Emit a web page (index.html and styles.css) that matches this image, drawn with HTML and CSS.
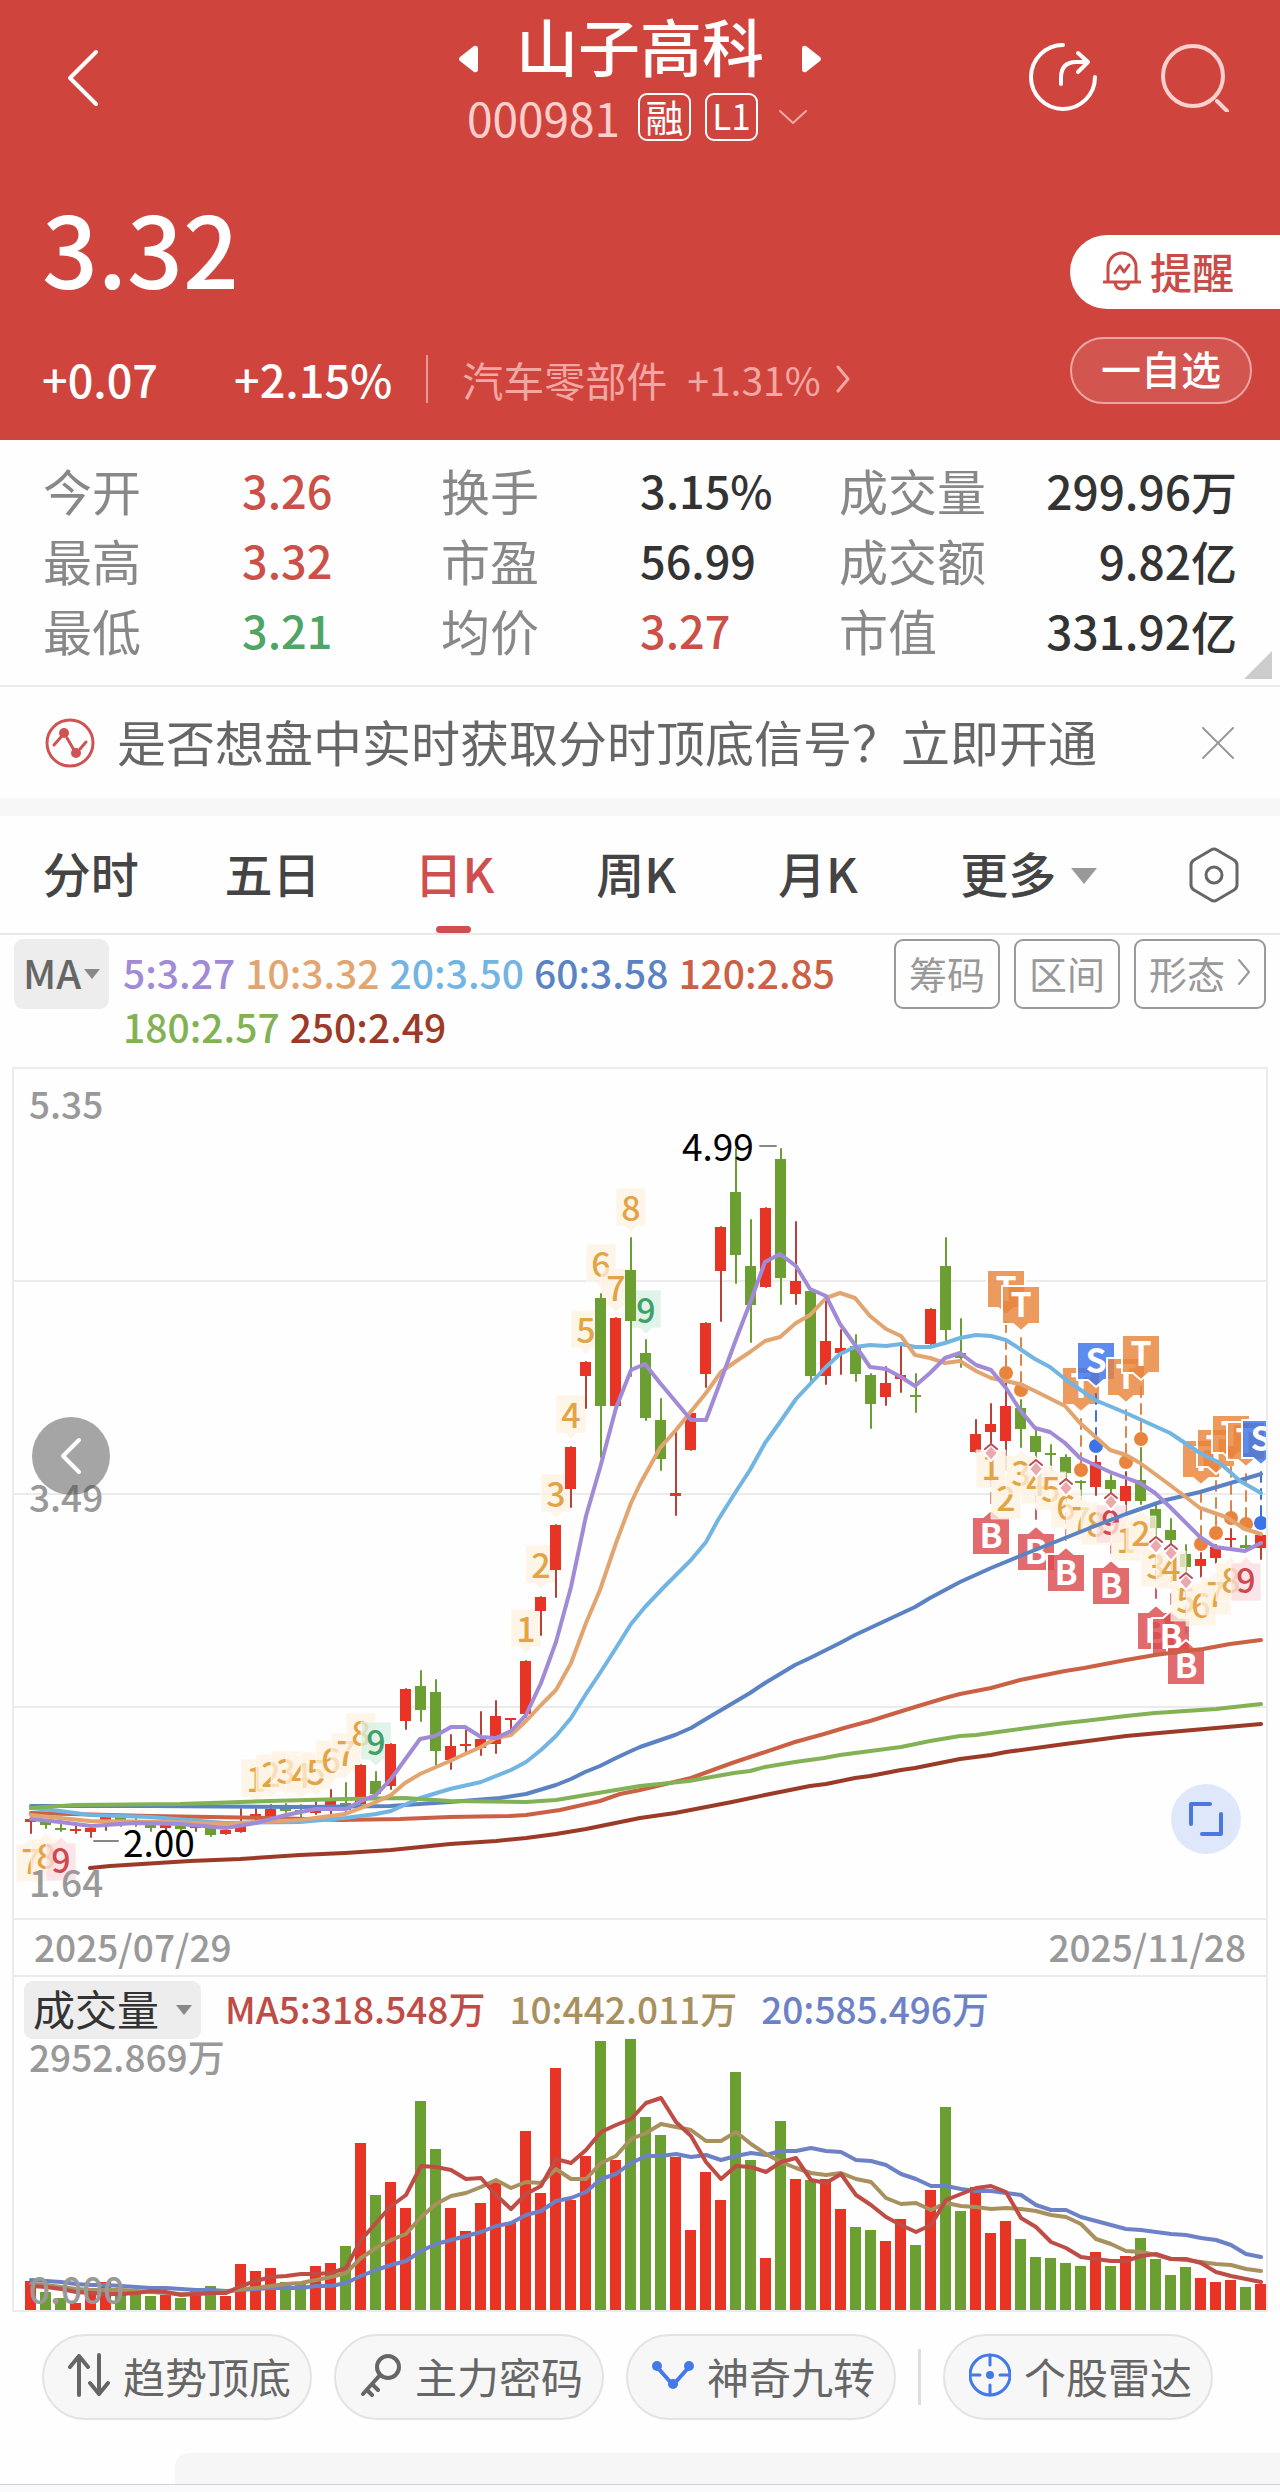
FILE: index.html
```html
<!DOCTYPE html>
<html lang="zh-CN">
    <head>
        <meta charset="utf-8">
        <title>山子高科 000981</title>
        <meta name="viewport" content="width=device-width">
        <link rel="stylesheet" href="styles.css">
    </head>
    <body>
        <header class="header">
            <div class="topbar">
                <button class="back" aria-label="返回">
                    <svg width="36" height="60" viewBox="0 0 36 60"><path d="M31 4 5 30 31 56"/></svg>
                </button>
                <div class="stock">
                    <div class="stock-name">
                        <button class="arrow" aria-label="上一只"><svg width="20" height="28" viewBox="0 0 20 28"><path d="M16 1Q20 0 20 4V24Q20 28 16 27L2 16Q0 14 2 12Z"/></svg></button>
                        <h1>山子高科</h1>
                        <button class="arrow" aria-label="下一只"><svg width="20" height="28" viewBox="0 0 20 28"><path d="M4 1Q0 0 0 4V24Q0 28 4 27L18 16Q20 14 18 12Z"/></svg></button>
                    </div>
                    <div class="stock-code">
                        <span class="code">000981</span>
                        <span class="tag">融</span>
                        <span class="tag tag-level">L1</span>
                        <svg class="down" width="28" height="16" viewBox="0 0 28 16"><path d="M1 2 14 14 27 2"/></svg>
                    </div>
                </div>
                <div class="tools">
                    <button aria-label="分享">
                        <svg width="70" height="70" viewBox="0 0 70 70"><path d="M35 3A32 32 0 1 0 67 35M33 42V36Q33 20 48 20H58M50 11 60 20 50 30"/></svg>
                    </button>
                    <button aria-label="搜索" class="search">
                        <svg width="70" height="70" viewBox="0 0 70 70"><circle cx="33" cy="34" r="30"/><path d="M57 59 67 69"/></svg>
                    </button>
                </div>
            </div>
            <div class="quote">
                <div>
                    <div class="price">3.32</div>
                    <div class="changes">
                        <span class="diff">+0.07</span>
                        <span>+2.15%</span>
                        <a href="#" class="sector">汽车零部件 <span class="sector-rate">+1.31%</span>
                            <svg width="14" height="30" viewBox="0 0 14 30"><path d="M2 3 12 15 2 27"/></svg>
                        </a>
                    </div>
                </div>
                <div class="actions">
                    <button class="remind">
                        <svg width="38" height="42" viewBox="0 0 38 42"><path d="M5 33V18a14 14 0 0 1 28 0v15M1 33H37M12 34q1 6 7 6t7-6M12 24l5-7 4 6 5-7"/></svg>
                        提醒
                    </button>
                    <button class="favorite">一自选</button>
                </div>
            </div>
        </header>

        <dl class="stats">
            <div><dt>今开</dt><dd class="up">3.26</dd></div>
            <div><dt>换手</dt><dd>3.15%</dd></div>
            <div><dt>成交量</dt><dd>299.96万</dd></div>
            <div><dt>最高</dt><dd class="up">3.32</dd></div>
            <div><dt>市盈</dt><dd>56.99</dd></div>
            <div><dt>成交额</dt><dd>9.82亿</dd></div>
            <div><dt>最低</dt><dd class="down-price">3.21</dd></div>
            <div><dt>均价</dt><dd class="up">3.27</dd></div>
            <div><dt>市值</dt><dd>331.92亿</dd></div>
        </dl>

        <div class="notice">
            <svg width="50" height="50" viewBox="0 0 50 50">
                <circle class="ring" cx="25" cy="25" r="23"/>
                <path d="M9 27 16 19M22 20 29 32M35 31 41 24"/>
                <circle class="dot" cx="19" cy="15" r="5"/><circle class="dot" cx="31" cy="35" r="5"/>
            </svg>
            <a href="#">是否想盘中实时获取分时顶底信号？立即开通</a>
            <button class="close" aria-label="关闭"><svg width="32" height="32" viewBox="0 0 32 32"><path d="M1 1 31 31M31 1 1 31"/></svg></button>
        </div>

        <nav class="tabs">
            <button>分时</button>
            <button>五日</button>
            <button class="active">日K</button>
            <button>周K</button>
            <button>月K</button>
            <button class="more">更多</button>
            <button class="settings" aria-label="设置">
                <svg width="50" height="56" viewBox="0 0 50 56"><path d="M22 3Q25 1 28 3L45 13Q48 15 48 18V38Q48 41 45 43L28 53Q25 55 22 53L5 43Q2 41 2 38V18Q2 15 5 13Z"/><circle cx="25" cy="28" r="8"/></svg>
            </button>
        </nav>

        <section class="ma-bar">
            <div class="picker">
                <select aria-label="主图指标"><option>MA</option></select>
            </div>
            <div class="legend">
                <span class="ma5">5:3.27</span>
                <span class="ma10">10:3.32</span>
                <span class="ma20">20:3.50</span>
                <span class="ma60">60:3.58</span>
                <span class="ma120">120:2.85</span>
                <span class="ma180">180:2.57</span>
                <span class="ma250">250:2.49</span>
            </div>
            <div class="ma-tools">
                <button>筹码</button>
                <button>区间</button>
                <button>形态<svg width="14" height="30" viewBox="0 0 14 30"><path d="M2 3 12 15 2 27"/></svg></button>
            </div>
        </section>

        <section class="chart">
            <div class="panel">
                <svg id="kline" viewBox="14 9 1252 849"></svg>
                <button class="prev" aria-label="向前"><svg width="24" height="38" viewBox="0 0 24 38"><path d="M20 3 4 19 20 35"/></svg></button>
                <button class="expand" aria-label="全屏"><svg width="34" height="34" viewBox="0 0 34 34"><path d="M2 22V2H21M32 12V32H13"/></svg></button>
            </div>
            <div class="dates"><span>2025/07/29</span><span>2025/11/28</span></div>
            <div class="vol-bar">
                <div class="picker vol-picker">
                    <select aria-label="副图指标"><option>成交量</option></select>
                </div>
                <span class="vol5">MA5:318.548万</span>
                <span class="vol10">10:442.011万</span>
                <span class="vol20">20:585.496万</span>
            </div>
            <svg id="volume" viewBox="14 0 1252 271"></svg>
        </section>

        <div class="features">
            <button>
                <svg width="42" height="44" viewBox="0 0 42 44"><path d="M11 42V3M2 14 11 3 20 14M31 2V41M22 30 31 41 40 30"/></svg>
                趋势顶底
            </button>
            <button>
                <svg width="42" height="44" viewBox="0 0 42 44"><circle cx="28" cy="14" r="11"/><path d="M20 22 3 41M12 31 18 37M7 37 12 42"/></svg>
                主力密码
            </button>
            <button>
                <svg class="blue" width="42" height="44" viewBox="0 0 42 44"><path d="M5 14 21 32 37 14"/><circle class="fill" cx="5" cy="13" r="5"/><circle class="fill" cx="21" cy="31" r="5"/><circle class="fill" cx="37" cy="13" r="5"/></svg>
                神奇九转
            </button>
            <span class="divider"></span>
            <button>
                <svg class="blue thin" width="42" height="44" viewBox="0 0 42 44"><circle cx="21" cy="22" r="20"/><path d="M21 2V12M21 32V42M1 22H11M31 22H41"/><circle class="fill" cx="21" cy="22" r="4"/></svg>
                个股雷达
            </button>
        </div>
        <div class="sheet"></div>
        <footer class="footer"></footer>

        <script src="script.js"></script>
    </body>
</html>
```

FILE: styles.css
```css
*{
    box-sizing: border-box;
}
body{
    margin: 0;
    background-color: #fefefe;
    font-family: "Noto Sans CJK SC", "Noto Sans", sans-serif;
    color: #333;
}
button, select{
    margin: 0;
    padding: 0;
    border: 0;
    background: none;
    font-family: inherit;
    font-weight: inherit;
    color: inherit;
}
a{
    color: inherit;
    text-decoration: none;
}
svg{
    display: block;
    flex: none;
    fill: none;
    stroke-linecap: round;
    stroke-linejoin: round;
}

/* header */
.header{
    background-color: #cf453e;
    color: #fff;
    padding-bottom: 36px;
}
.header svg{
    stroke: #fff;
    stroke-width: 4;
}
.topbar{
    display: grid;
    grid-template-columns: 1fr auto 1fr;
    height: 141px;
    padding: 13px 50px 0;
}
.back{
    justify-self: start;
    align-self: start;
    margin: 35px 0 0 15px;
}
.stock-name{
    display: flex;
    justify-content: center;
    align-items: flex-end;
    gap: 38px;
    height: 64px;
}
.stock-name h1{
    margin: 0;
    font-size: 62px;
    line-height: 64px;
    font-weight: 500;
}
.arrow{
    margin-bottom: 4px;
}
.header .arrow svg{
    fill: #fff;
    stroke: none;
}
.stock-code{
    display: flex;
    justify-content: center;
    align-items: center;
    margin-top: 16px;
    padding-right: 6px;
}
.code{
    margin-right: 18px;
    font-size: 46px;
    line-height: 48px;
    color: #fccfcd;
}
.tag{
    width: 53px;
    height: 48px;
    margin-right: 14px;
    border: 2px solid #fff;
    border-radius: 9px;
    font-size: 38px;
    line-height: 42px;
    text-align: center;
}
.tag-level{
    margin-right: 21px;
    font-size: 35px;
    line-height: 40px;
}
.header .down{
    stroke: #f3aaa7;
    stroke-width: 2;
}
.tools{
    display: flex;
    justify-self: end;
    align-self: start;
    gap: 62px;
    margin-top: 29px;
}
.header .search svg{
    stroke: #fbd0ce;
}
.quote{
    display: flex;
    justify-content: space-between;
}
.price{
    margin-top: 43px;
    padding-left: 42px;
    font-size: 98px;
    line-height: 124px;
    font-weight: 500;
}
.changes{
    display: flex;
    align-items: center;
    margin-top: 47px;
    padding-left: 42px;
    font-size: 45px;
    line-height: 48px;
    font-weight: 500;
}
.diff{
    margin-right: 76px;
}
.sector{
    display: flex;
    align-items: center;
    margin-left: 34px;
    padding-left: 34px;
    border-left: 2px solid #e59a96;
    font-size: 41px;
    font-weight: 400;
    color: #f2a7a3;
}
.sector-rate{
    margin: 0 15px 0 20px;
    font-size: 39px;
}
.header .sector svg{
    stroke: #f2a7a3;
    stroke-width: 3;
}
.actions{
    display: flex;
    flex-direction: column;
    gap: 28px;
    width: 210px;
    padding-top: 94px;
}
.remind{
    display: flex;
    align-items: center;
    gap: 9px;
    height: 74px;
    padding-left: 33px;
    padding-bottom: 4px;
    border-radius: 37px 0 0 37px;
    background-color: #fff;
    color: #c94c48;
    font-size: 42px;
    font-weight: 500;
}
.header .remind svg{
    stroke: #c94c48;
    stroke-width: 3;
}
.favorite{
    width: 182px;
    height: 67px;
    padding-bottom: 5px;
    border: 2px solid #eba6a3;
    border-radius: 34px;
    background-color: #d3554f;
    font-size: 40px;
    line-height: 58px;
    font-weight: 500;
}

/* quote table */
.stats{
    position: relative;
    display: grid;
    grid-template-columns: 1fr 1fr 1fr;
    margin: 0;
    padding: 15px 43px 20px 43px;
    border-bottom: 2px solid #ebebeb;
}
.stats::after{
    content: "";
    position: absolute;
    right: 8px;
    bottom: 6px;
    border-left: 28px solid transparent;
    border-bottom: 28px solid #ccc;
}
.stats div{
    display: flex;
    height: 70px;
    line-height: 70px;
}
.stats dt{
    width: 50%;
    font-size: 49px;
    color: #888;
}
.stats dd{
    margin: 0;
    font-size: 45px;
    font-weight: 500;
    white-space: nowrap;
}
.stats div:nth-child(3n){
    justify-content: space-between;
}
.stats div:nth-child(3n) dt{
    width: auto;
}
.stats div:nth-child(3n) dd{
    font-size: 46px;
}
.stats .up{
    color: #cb5047;
}
.stats .down-price{
    color: #4fa466;
}

.notice{
    display: flex;
    align-items: center;
    height: 129px;
    padding: 0 46px 0 45px;
    border-bottom: 18px solid #f7f7f7;
    font-size: 49px;
    color: #666;
}
.notice a{
    flex: 1;
    padding: 0 0 3px 22px;
    line-height: 60px;
}
.notice svg{
    stroke: #cf5353;
    stroke-width: 3;
}
.notice .dot{
    fill: #cf5353;
    stroke: none;
}
.notice .close svg{
    stroke: #999;
    stroke-width: 2;
}

/* period tabs */
.tabs{
    display: flex;
    align-items: center;
    height: 119px;
    border-bottom: 2px solid #e9e9e9;
    font-weight: 500;
}
.tabs button{
    position: relative;
    width: 14.2%;
    height: 117px;
    padding-bottom: 5px;
    font-size: 48px;
    color: #444;
}
.tabs .active{
    color: #cf4f50;
}
.tabs .active::after{
    content: "";
    position: absolute;
    left: 50%;
    bottom: 0;
    width: 35px;
    height: 7px;
    margin-left: -18px;
    border-radius: 4px;
    background-color: #cf4f50;
}
.tabs .more{
    display: flex;
    flex: 1;
    align-items: center;
    justify-content: center;
    gap: 15px;
}
.more::after{
    content: "";
    margin-top: 8px;
    border: 13px solid transparent;
    border-top: 16px solid #999;
    border-bottom: 0;
}
.tabs .settings{
    width: 50px;
    margin: 0 41px 0 40px;
    padding: 0;
}
.settings svg{
    stroke: #666;
    stroke-width: 3;
}

/* moving average legend */
.ma-bar{
    display: flex;
    align-items: flex-start;
    height: 132px;
    padding: 4px 14px 0;
}
.picker{
    position: relative;
    width: 95px;
    height: 70px;
    border-radius: 9px;
    background-color: #ededed;
}
.picker select{
    appearance: none;
    width: 100%;
    height: 100%;
    padding: 0 0 5px 9px;
    font-size: 40px;
    font-weight: 500;
    color: #666;
}
.picker::after{
    content: "";
    position: absolute;
    right: 9px;
    top: 50%;
    margin-top: -5px;
    border: 8px solid transparent;
    border-top: 10px solid #888;
    border-bottom: 0;
    pointer-events: none;
}
.legend{
    display: flex;
    flex: 1;
    flex-wrap: wrap;
    column-gap: 10px;
    padding: 6px 0 0 14px;
    font-size: 39px;
    line-height: 54px;
    font-weight: 500;
}
.ma5{ color: #a18ad6; }
.ma10{ color: #e3a56f; }
.ma20{ color: #73b5e2; }
.ma60{ color: #5b83c4; }
.ma120{ color: #cb6045; }
.ma180{ color: #83b254; }
.ma250{ color: #9c3a28; }
.ma-tools{
    display: flex;
    gap: 14px;
}
.ma-tools button{
    display: flex;
    align-items: center;
    gap: 12px;
    height: 70px;
    padding: 0 13px 4px;
    border: 2px solid #999;
    border-radius: 9px;
    font-size: 38px;
    color: #999;
}
.ma-tools svg{
    stroke: #999;
    stroke-width: 2;
}

/* charts */
.chart{
    margin: 0 12px;
    border: 2px solid #ebebeb;
}
.chart > svg, .panel > svg{
    width: 100%;
}
#volume{
    overflow: visible;
}
.panel{
    position: relative;
}
.prev{
    position: absolute;
    left: 18px;
    top: 41%;
    display: flex;
    align-items: center;
    justify-content: center;
    width: 78px;
    height: 78px;
    border-radius: 50%;
    background-color: rgba(75, 75, 75, 0.5);
}
.prev svg{
    stroke: #fff;
    stroke-width: 4;
}
.expand{
    position: absolute;
    right: 25px;
    bottom: 64px;
    display: flex;
    align-items: center;
    justify-content: center;
    width: 70px;
    height: 70px;
    border-radius: 50%;
    background-color: #dfe7fa;
}
.expand svg{
    stroke: #4a78e0;
    stroke-width: 4;
}
.dates{
    display: flex;
    justify-content: space-between;
    height: 59px;
    padding: 0 20px;
    border: solid #ebebeb;
    border-width: 2px 0;
    font-size: 37px;
    line-height: 52px;
    font-weight: 500;
    color: #999;
}
.vol-bar{
    display: flex;
    align-items: center;
    gap: 24px;
    height: 62px;
    padding: 4px 10px 0;
    font-size: 37px;
    line-height: 50px;
    font-weight: 500;
}
.vol-bar span{
    padding-bottom: 4px;
}
.vol-picker{
    width: 177px;
    height: 58px;
}
.vol-picker select{
    padding-bottom: 4px;
    font-size: 42px;
    line-height: 52px;
    font-weight: 400;
    color: #333;
}
.vol5{ color: #c04c46; }
.vol10{ color: #a8905f; }
.vol20{ color: #6d82c6; }

.grid{ stroke: #ebebeb; stroke-width: 2; }
.line{ stroke: currentColor; stroke-width: 4; }
.red{ fill: #e73425; stroke: #e73425; stroke-width: 0; }
.green{ fill: #6c9f31; stroke: #6c9f31; stroke-width: 0; }
.wick{ stroke-width: 2; }
.red.wick{ stroke: #b84238; }
.axis{ font-size: 37px; font-weight: 500; fill: #999; }
.peak{ font-size: 37px; fill: #000; }
.peak-line{ stroke: #888; stroke-width: 2; }
.badge{ fill: #fdf1e1; fill-opacity: 0.75; stroke: #fff; stroke-opacity: 0.6; stroke-width: 1; }
.badge-text{ font-size: 34px; font-weight: 500; fill: #e2a446; text-anchor: middle; }
.badge.nine-red{ fill: #f9dce0; }
.badge-text.nine-red{ fill: #cf4750; }
.badge.nine-green{ fill: #d7f0e2; }
.badge-text.nine-green{ fill: #41a067; }
.mark{ stroke: #fff; stroke-width: 2; fill-opacity: 0.82; }
.mark-text{ font-size: 34px; font-weight: 700; fill: #fff; text-anchor: middle; }
.mark-line{ stroke-width: 2; stroke-dasharray: 10 7; }
.fill-t{ fill: #e9843c; }
.fill-s{ fill: #3b73ea; }
.fill-b{ fill: #dc4a4e; }
.stroke-t{ stroke: #e08548; }
.stroke-s{ stroke: #3b73d8; }
.stroke-b{ stroke: #cf5b66; }
.gem{ fill: #e9a9ad; stroke: #fff; stroke-width: 2; }
.gem-top{ stroke: #b94d57; stroke-width: 2; }

/* bottom buttons */
.features{
    display: flex;
    align-items: center;
    gap: 22px;
    padding: 22px 42px 33px;
}
.features button{
    display: flex;
    align-items: center;
    gap: 13px;
    height: 86px;
    padding: 0 19px 4px 24px;
    border: 2px solid #e3e3e3;
    border-radius: 43px;
    background-color: #f7f7f7;
    font-size: 42px;
    color: #666;
    white-space: nowrap;
}
.features svg{
    stroke: #666;
    stroke-width: 4;
}
.features .blue{
    stroke: #4379e8;
}
.features .thin{
    stroke-width: 3;
}
.blue .fill{
    fill: #4379e8;
    stroke: none;
}
.divider{
    width: 3px;
    height: 56px;
    background-color: #ddd;
}
.sheet{
    height: 31px;
    margin-left: 175px;
    border-radius: 14px 0 0 0;
    background-color: #f6f6f6;
}
.footer{
    height: 8px;
    border-top: 1px solid #cfcfd4;
    background-color: #f9f9fb;
}
```

FILE: script.js
```javascript
var kline = document.getElementById('kline');
var volume = document.getElementById('volume');

// colour, high, top of body, bottom of body, low, volume
var days = [
    ['r',759,759,762,773,29],['g',760,762,765,768,18],['g',763,768,770,771,12],['r',765,769,771,773,7],['r',766,768,772,777,17],
    ['r',757,757,761,770,28],['g',757,757,761,766,17],['g',759,762,764,766,17],['g',764,765,768,771,14],['r',764,765,768,771,15],
    ['g',764,766,769,770,12],['r',765,766,768,771,22],['g',768,768,775,776,24],['r',770,770,774,774,14],['r',749,762,772,772,46],
    ['r',749,754,758,760,39],['r',745,749,757,757,42],['g',744,747,751,752,28],['g',745,750,752,758,26],['r',742,751,753,754,44],
    ['r',730,741,751,755,47],['g',723,743,750,751,64],['r',705,705,744,744,167],['g',712,721,734,735,115],['r',684,684,726,729,128],
    ['r',629,629,661,669,102],['g',611,626,650,661,209],['g',620,632,691,706,161],['r',675,686,700,709,102],['r',670,684,686,692,79],
    ['r',652,679,688,695,107],['r',641,656,684,693,128],['r',659,658,660,670,88],['r',601,601,654,657,179],['r',537,537,551,575,117],
    ['r',465,465,510,537,242],['r',387,387,429,447,110],['r',302,302,316,348,154],['g',234,238,346,397,269],['r',258,258,346,346,150],
    ['g',178,210,261,316,271],['g',280,293,358,360,193],['g',339,360,399,410,175],['r',369,433,436,455,153],['r',353,353,390,390,80],
    ['r',263,263,314,327,138],['r',167,167,211,261,110],['g',89,132,195,223,238],['g',160,206,245,282,150],['r',148,148,227,227,52],
    ['g',89,99,218,244,189],['r',162,221,234,244,131],['g',231,231,316,321,130],['r',237,281,316,324,131],['r',270,288,293,314,101],
    ['g',275,286,314,321,83],['g',314,315,344,368,80],['r',307,323,337,345,69],['r',286,315,319,332,91],['g',314,335,337,352,65],
    ['r',249,249,284,284,120],['g',178,206,270,283,203],['g',259,293,298,307,99],['r',360,374,392,392,123],['r',344,364,372,383,77],
    ['r',317,346,381,410,89],['g',340,348,369,387,71],['g',369,376,392,397,53],['g',385,393,395,410,52],['g',395,397,413,419,47],
    ['g',421,421,423,439,44],['r',396,402,427,435,58],['g',415,420,429,432,44],['r',412,426,441,452,54],['g',388,420,441,444,72],
    ['g',445,449,468,475,51],['g',459,470,480,485,35],['g',485,494,507,511,43],['r',493,499,506,517,32],['r',485,487,498,503,28],
    ['r',469,478,480,488,30],['g',476,485,488,490,23],['r',475,475,488,499,26]
];

var maLines = {
    ma250: '90,808 110,806 190,801 240,799 300,795 345,793 391,790 450,784 496,781 526,778 556,774 586,769 640,758 675,753 732,742 765,735 810,726 826,724 855,718 870,716 901,710 915,708 960,699 991,695 1006,692 1065,684 1126,676 1170,672 1216,668 1261,664',
    ma120: '31,753 150,756 210,757 270,758 340,760 400,759 450,757 510,756 526,755 560,750 600,741 620,734 640,730 691,718 732,703 762,693 795,682 824,674 844,668 870,661 886,656 915,647 945,638 960,634 991,628 1020,620 1065,611 1084,608 1126,600 1155,595 1185,591 1203,589 1230,584 1261,580',
    ma60: '31,746 150,746 300,747 390,746 450,742 500,738 526,734 556,725 571,719 585,712 600,706 616,698 631,691 640,687 675,675 691,668 706,659 750,633 765,623 795,605 810,598 840,583 855,575 885,561 915,547 930,538 960,522 991,508 1020,496 1065,478 1095,466 1126,454 1166,440 1200,432 1261,414',
    ma20: '31,748 60,751 90,755 150,757 226,763 300,762 345,758 376,754 391,751 420,738 450,729 481,722 511,710 526,702 541,690 556,676 571,658 586,634 600,613 616,588 631,564 645,547 664,527 691,500 706,482 718,460 735,433 750,410 765,383 780,362 796,339 826,307 840,294 855,287 870,285 886,286 901,284 915,287 930,287 945,283 960,278 976,275 991,276 1006,280 1020,289 1035,299 1050,307 1065,319 1095,340 1126,353 1170,373 1200,393 1220,403 1240,421 1261,433',
    ma180: '31,748 75,745 180,744 270,741 345,739 405,738 450,741 526,742 556,740 586,735 640,726 689,721 734,713 750,711 765,707 795,702 824,698 840,695 901,687 930,681 960,676 976,675 1065,663 1084,661 1126,656 1155,653 1216,649 1261,644',
    ma10: '31,755 90,761 170,762 226,764 256,762 300,760 345,754 361,748 376,742 391,735 405,723 420,714 450,701 465,694 481,687 496,678 511,675 526,661 541,645 556,630 571,603 586,563 600,530 616,483 631,443 640,424 660,388 676,370 706,333 721,312 735,302 750,292 765,281 780,277 796,263 810,255 826,238 840,233 855,238 870,256 886,269 901,276 915,295 930,298 945,303 960,301 976,311 991,318 1020,324 1035,331 1065,346 1080,363 1110,390 1126,395 1140,403 1170,425 1200,448 1226,457 1245,469 1261,474',
    ma5: '31,759 60,762 91,766 135,763 180,764 226,768 256,763 286,755 316,749 346,749 361,741 376,735 391,719 420,679 435,676 451,667 465,667 481,677 496,678 511,671 526,655 541,623 556,582 571,527 586,456 600,408 616,348 631,310 645,304 660,323 676,342 691,360 706,360 721,320 735,282 750,243 765,202 780,194 796,206 810,229 826,236 840,264 855,285 870,307 886,309 901,317 915,326 930,313 945,298 960,293 976,305 991,310 1006,328 1020,350 1035,368 1050,372 1065,383 1080,398 1095,405 1110,412 1126,418 1140,423 1155,433 1170,447 1200,477 1215,487 1245,491 1261,483'
};

// day index, tip of the badge, number
var badgesAbove = [
    [15,743,1],[16,738,2],[17,735,3],[18,739,4],[19,736,5],[20,724,6],[21,717,7],[22,697,8],[23,706,9],
    [33,593,1],[34,529,2],[35,458,3],[36,379,4],[37,294,5],[38,228,6],[39,252,7],[40,172,8],[41,274,9]
];
var badgesBelow = [
    [0,778,7],[1,773,8],[2,777,9],
    [64,384,1],[65,415,2],[66,390,3],[67,400,4],[68,406,5],[69,424,6],[70,436,7],[71,441,8],[72,439,9],
    [73,457,1],[74,450,2],[75,483,3],[76,485,4],[77,517,5],[78,522,6],[79,511,7],[80,497,8],[81,497,9]
];

// type, day index, top of the box, signal point
var sellMarks = [
    ['T',65,210,313],['T',66,226,330],['T',70,307,410],['S',71,282,386],['T',73,298,402],['T',74,275,379],
    ['T',78,380,484],['T',79,369,473],['T',80,355,458],['T',81,362,464],['S',82,360,463]
];
var buyMarks = [
    ['B',64,457,392],['B',67,473,408],['B',69,494,427],['B',72,507,441],['B',75,552,485],['B',76,558,492],['B',77,587,521]
];

function add(svg, name, attrs, text){
    var el = document.createElementNS('http://www.w3.org/2000/svg', name);
    for (var key in attrs){
        el.setAttribute(key, attrs[key]);
    }
    if (text !== undefined){
        el.textContent = text;
    }
    svg.appendChild(el);
}

function dayX(i){
    return 31 + i * 15;
}

function drawBadge(i, tip, number, dir){
    var x = dayX(i);
    var near = tip + 6 * dir;
    var far = tip + 44 * dir;
    var type = number != 9 ? '' : dir > 0 ? ' nine-red' : ' nine-green';
    add(kline, 'path', {
        class: 'badge' + type,
        d: 'M' + x + ' ' + tip + 'L' + (x + 6) + ' ' + near + 'H' + (x + 15) + 'V' + far + 'H' + (x - 15) + 'V' + near + 'H' + (x - 6) + 'Z'
    });
    add(kline, 'text', {class: 'badge-text' + type, x: x, y: dir > 0 ? tip + 36 : tip - 11}, number);
}

function drawMark(mark, dir){
    var type = mark[0].toLowerCase();
    var x = dayX(mark[1]);
    var top = mark[2];
    var near = dir > 0 ? top : top + 38;
    var far = dir > 0 ? top + 38 : top;
    add(kline, 'path', {class: 'mark-line stroke-' + type, d: 'M' + x + ' ' + (near - 14 * dir) + 'V' + mark[3]});
    if (type != 'b'){
        add(kline, 'circle', {class: 'fill-' + type, cx: x, cy: mark[3], r: 7});
    }
    add(kline, 'path', {
        class: 'mark fill-' + type,
        d: 'M' + x + ' ' + (near - 7 * dir) + 'L' + (x + 8) + ' ' + near + 'H' + (x + 19) + 'V' + far + 'H' + (x - 19) + 'V' + near + 'H' + (x - 8) + 'Z'
    });
    add(kline, 'text', {class: 'mark-text', x: x, y: top + 31}, mark[0]);
}

function drawKline(){
    [221, 434, 647].forEach(function(y){
        add(kline, 'path', {class: 'grid', d: 'M14 ' + y + 'H1266'});
    });
    badgesAbove.forEach(function(b){ drawBadge(b[0], b[1], b[2], -1); });
    days.forEach(function(day, i){
        var color = day[0] == 'r' ? 'red' : 'green';
        add(kline, 'path', {class: color + ' wick', d: 'M' + dayX(i) + ' ' + day[1] + 'V' + day[4]});
        add(kline, 'rect', {class: color, x: dayX(i) - 6, y: day[2], width: 11, height: day[3] - day[2]});
    });
    buyMarks.forEach(function(m){ drawMark(m, 1); });
    badgesBelow.forEach(function(b){ drawBadge(b[0], b[1], b[2], 1); });
    buyMarks.forEach(function(m){
        var x = dayX(m[1]);
        add(kline, 'path', {class: 'gem', d: 'M' + x + ' ' + (m[3] - 7) + 'l7 8-7 8-7-8Z'});
        add(kline, 'path', {class: 'gem-top', d: 'M' + (x - 6) + ' ' + (m[3] - 3) + 'l6-5 6 5'});
    });
    sellMarks.forEach(function(m){ drawMark(m, -1); });
    for (var name in maLines){
        add(kline, 'polyline', {class: 'line ' + name, points: maLines[name]});
    }
    add(kline, 'text', {class: 'axis', x: 29, y: 59}, '5.35');
    add(kline, 'text', {class: 'axis', x: 29, y: 452}, '3.49');
    add(kline, 'text', {class: 'axis', x: 29, y: 837}, '1.64');
    add(kline, 'text', {class: 'peak', x: 682, y: 101}, '4.99');
    add(kline, 'path', {class: 'peak-line', d: 'M760 86H776'});
    add(kline, 'text', {class: 'peak', x: 123, y: 797}, '2.00');
    add(kline, 'path', {class: 'peak-line', d: 'M94 781H118'});
}

function average(values, end, count){
    var sum = 0;
    for (var i = end - count + 1; i <= end; i++){
        sum += values[i];
    }
    return sum / count;
}

function drawVolume(){
    // the 19 days before the first one drawn, needed for the averages
    var values = [38,38,36,36,34,34,32,32,30,30,30,28,28,26,26,24,24,22,22];
    var before = values.length;
    days.forEach(function(day, i){
        values.push(day[5]);
        add(volume, 'rect', {class: day[0] == 'r' ? 'red' : 'green', x: dayX(i) - 6, y: 271 - day[5], width: 11, height: day[5]});
    });
    [[20, 'vol20'], [10, 'vol10'], [5, 'vol5']].forEach(function(ma){
        var points = days.map(function(day, i){
            return dayX(i) + ',' + Math.round(271 - average(values, i + before, ma[0]));
        });
        add(volume, 'polyline', {class: 'line ' + ma[1], points: points.join(' ')});
    });
    add(volume, 'text', {class: 'axis', x: 29, y: 33}, '2952.869万');
    add(volume, 'text', {class: 'axis', x: 29, y: 265}, '0.000');
}

drawKline();
drawVolume();
```
